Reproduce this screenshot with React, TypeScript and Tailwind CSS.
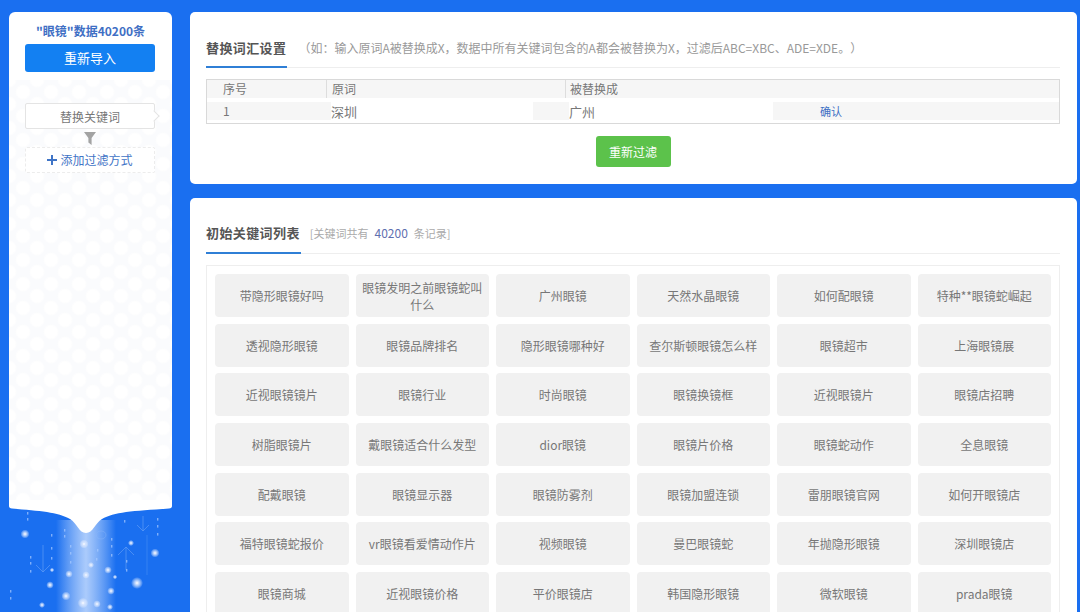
import * as React from 'react';

const keywords = [
  '带隐形眼镜好吗', '眼镜发明之前眼镜蛇叫什么', '广州眼镜', '天然水晶眼镜', '如何配眼镜', '特种**眼镜蛇崛起',
  '透视隐形眼镜', '眼镜品牌排名', '隐形眼镜哪种好', '查尔斯顿眼镜怎么样', '眼镜超市', '上海眼镜展',
  '近视眼镜镜片', '眼镜行业', '时尚眼镜', '眼镜换镜框', '近视眼镜片', '眼镜店招聘',
  '树脂眼镜片', '戴眼镜适合什么发型', 'dior眼镜', '眼镜片价格', '眼镜蛇动作', '全息眼镜',
  '配戴眼镜', '眼镜显示器', '眼镜防雾剂', '眼镜加盟连锁', '雷朋眼镜官网', '如何开眼镜店',
  '福特眼镜蛇报价', 'vr眼镜看爱情动作片', '视频眼镜', '曼巴眼镜蛇', '年抛隐形眼镜', '深圳眼镜店',
  '眼镜商城', '近视眼镜价格', '平价眼镜店', '韩国隐形眼镜', '微软眼镜', 'prada眼镜',
];

// 侧边栏底部的光点
const dots = [
  [25, 534, 3], [84, 544, 3], [155, 553, 3], [137, 583, 4], [50, 585, 2.5], [69, 574, 2.5],
  [86, 575, 2.5], [83, 603, 3.5], [66, 596, 3], [108, 570, 2.5], [111, 591, 2.5], [91, 565, 2],
  [42, 605, 2], [110, 607, 2], [131, 543, 2], [52, 570, 1.5], [115, 577, 1.5], [97, 604, 2.5],
];

const pixels = [
  [27, 512], [27, 518], [51, 534], [51, 547], [64, 529], [64, 535], [70, 545], [70, 552], [70, 561],
  [30, 556], [30, 562], [30, 570], [97, 549], [111, 538], [111, 545], [111, 554], [126, 560], [126, 569],
  [157, 518], [157, 525], [157, 533], [124, 520], [10, 590], [10, 597], [51, 557], [96, 558],
];

const SidebarBottom = () => (
  <svg viewBox="0 500 190 112" className="block w-[190px] h-[112px] -ml-[9px] shrink-0">
    <defs>
      <linearGradient id="beam" x1="0" x2="1" y1="0" y2="0">
        <stop offset="0" stopColor="#ffffff" stopOpacity="0" />
        <stop offset="0.5" stopColor="#cfe2ff" stopOpacity="0.8" />
        <stop offset="1" stopColor="#ffffff" stopOpacity="0" />
      </linearGradient>
      <radialGradient id="dot">
        <stop offset="0" stopColor="#ffffff" />
        <stop offset="0.35" stopColor="#dfeaff" stopOpacity="0.8" />
        <stop offset="1" stopColor="#ffffff" stopOpacity="0" />
      </radialGradient>
    </defs>
    <rect x="56" y="520" width="60" height="92" fill="url(#beam)" />
    <g stroke="#8db9fb" strokeWidth="0.7" fill="none" opacity="0.6">
      <path d="M43 545V572M36 565L43 572L50 565" />
      <path d="M143 516V531M137 525L143 531L149 525" />
      <path d="M126 547V570M118 555L126 547L134 555" />
      <ellipse cx="101" cy="535" rx="5" ry="4" />
      <path d="M147 535V575" opacity="0.6" />
    </g>
    {pixels.map(([x, y]) => (
      <rect key={`${x}-${y}`} x={x} y={y} width="1.4" height="2.6" fill="#a9cbff" opacity="0.7" />
    ))}
    {dots.map(([x, y, r]) => (
      <circle key={`${x}-${y}`} cx={x} cy={y} r={r * 1.5} fill="url(#dot)" />
    ))}
    <path
      d="M9 500V506Q9 508 12 508.5C40 511 58 512 70 519C77 523 79 533 86 533C93 533 95 523 102 519C114 512 132 511 169 508.5Q172 508 172 506V500Z"
      fill="#fff"
    />
  </svg>
);

const Sidebar = () => (
  <div className="w-[163px] shrink-0 flex flex-col">
    <div className="h-[488px] bg-white rounded-t-[6px] flex flex-col">
      <div className="h-[32px] pt-[10px] text-center text-[12px] leading-[17px] font-bold text-[#3f6fc4]">
        "眼镜"数据40200条
      </div>
      <div className="pl-[16px] pr-[17px]">
        <button className="w-full h-[28px] rounded-[3px] bg-[#1380f2] text-white text-[13px] leading-[28px]">
          重新导入
        </button>
      </div>
      <div className="flex-1 mt-[8px] pt-[23px] pl-[16px] pr-[17px] bg-[#fafbfd] bg-[radial-gradient(circle,#ffffff_6px,transparent_8px),radial-gradient(circle,#ffffff_6px,transparent_8px)] bg-[length:28px_24px] bg-[position:0_0,14px_12px]">
        <div className="relative h-[26px] bg-white border border-[#e4e4e4] rounded-[2px] text-center text-[12px] leading-[26px] text-[#777]">
          替换关键词
          <span className="absolute -right-[4px] top-[8px] w-[8px] h-[8px] rotate-45 bg-white border-t border-r border-[#e4e4e4]" />
        </div>
        <div className="h-[18px] flex items-center justify-center">
          <svg viewBox="0 0 12 13" className="w-[12px] h-[13px]">
            <path d="M0 0H12L7.6 6V13L4.4 10.5V6Z" fill="#a3a3a3" />
          </svg>
        </div>
        <div className="h-[26px] bg-white border border-dashed border-[#ececec] rounded-[2px] flex items-center justify-center gap-[3px] text-[12px] text-[#3f74c6]">
          <svg viewBox="0 0 10 10" className="w-[10px] h-[10px]">
            <path d="M5 0V10M0 5H10" stroke="#3f74c6" strokeWidth="2" />
          </svg>
          添加过滤方式
        </div>
      </div>
    </div>
    <SidebarBottom />
  </div>
);

const SectionTitle = ({ width, pad, title, children }: { width: string; pad: string; title: string; children: React.ReactNode }) => (
  <div className={`relative flex items-center border-b border-[#eeeeee] ${pad}`}>
    <span className="text-[13px] leading-[18px] font-bold tracking-[0.4px] text-[#555] whitespace-nowrap">{title}</span>
    {children}
    <span className={`absolute left-0 -bottom-px h-[2px] bg-[#2f7fd6] ${width}`} />
  </div>
);

const ReplaceCard = () => (
  <div className="h-[172px] bg-white rounded-[5px] pl-[16px] pr-[17px] pt-[27px]">
    <SectionTitle width="w-[81px]" pad="pb-[10px]" title="替换词汇设置">
      <span className="ml-[12px] text-[12px] text-[#999] whitespace-nowrap [text-spacing-trim:space-all]">
        （如：输入原词A被替换成X，数据中所有关键词包含的A都会被替换为X，过滤后ABC=XBC、ADE=XDE。）
      </span>
    </SectionTitle>
    <div className="mt-[11px] h-[45px] border border-[#d9d9d9] text-[12px] text-[#777]">
      <div className="h-[18px] flex items-center bg-[#f6f6f6] leading-[18px]">
        <span className="w-[119px] pl-[16px]">序号</span>
        <span className="w-[239px] pl-[5px] border-l border-[#dddddd]">原词</span>
        <span className="pl-[4px] border-l border-[#dddddd]">被替换成</span>
      </div>
      <div className="mt-[4px] h-[18px] flex items-center bg-[#f6f6f6] leading-[18px]">
        <span className="w-[124px] pl-[16px]">1</span>
        <span className="w-[202px] h-[18px] bg-white text-[13px] pt-px">深圳</span>
        <span className="w-[36px]" />
        <span className="w-[204px] h-[18px] bg-white text-[13px] pt-px">广州</span>
        <span className="ml-[47px] text-[#3d6fc4] text-[11px]">确认</span>
      </div>
    </div>
    <div className="mt-[12px] flex justify-center">
      <button className="w-[75px] h-[31px] rounded-[3px] bg-[#5cc24b] text-white text-[12px]">重新过滤</button>
    </div>
  </div>
);

const KeywordCard = () => (
  <div className="flex-1 min-h-0 bg-white rounded-t-[5px] pl-[16px] pr-[17px] pt-[26px] overflow-hidden">
    <SectionTitle width="w-[95px]" pad="pb-[11px]" title="初始关键词列表">
      <span className="ml-[10px] text-[11px] leading-[18px] text-[#aaa] whitespace-nowrap">
        [关键词共有<span className="mx-[6px] text-[12px] text-[#5f6fb0]">40200</span>条记录]
      </span>
    </SectionTitle>
    <div className="mt-[11px] border border-[#eeeeee] px-[8px] pt-[8px] grid grid-cols-6 gap-x-[7px] gap-y-[6.7px]">
      {keywords.map(word => (
        <div
          key={word}
          className="h-[43px] rounded-[4px] bg-[#f1f1f1] px-[6px] flex items-center justify-center text-center text-[12px] leading-[17px] text-[#777]"
        >
          {word}
        </div>
      ))}
    </div>
  </div>
);

const App = () => (
  <div className="w-[1080px] h-[612px] overflow-hidden bg-[#1a6ff0] flex pt-[12px] pl-[9px] pr-[3px] gap-[18px] font-['Noto_Sans_CJK_SC','Liberation_Sans',sans-serif]">
    <Sidebar />
    <div className="flex-1 min-w-0 flex flex-col gap-[14px]">
      <ReplaceCard />
      <KeywordCard />
    </div>
  </div>
);

export default App;
